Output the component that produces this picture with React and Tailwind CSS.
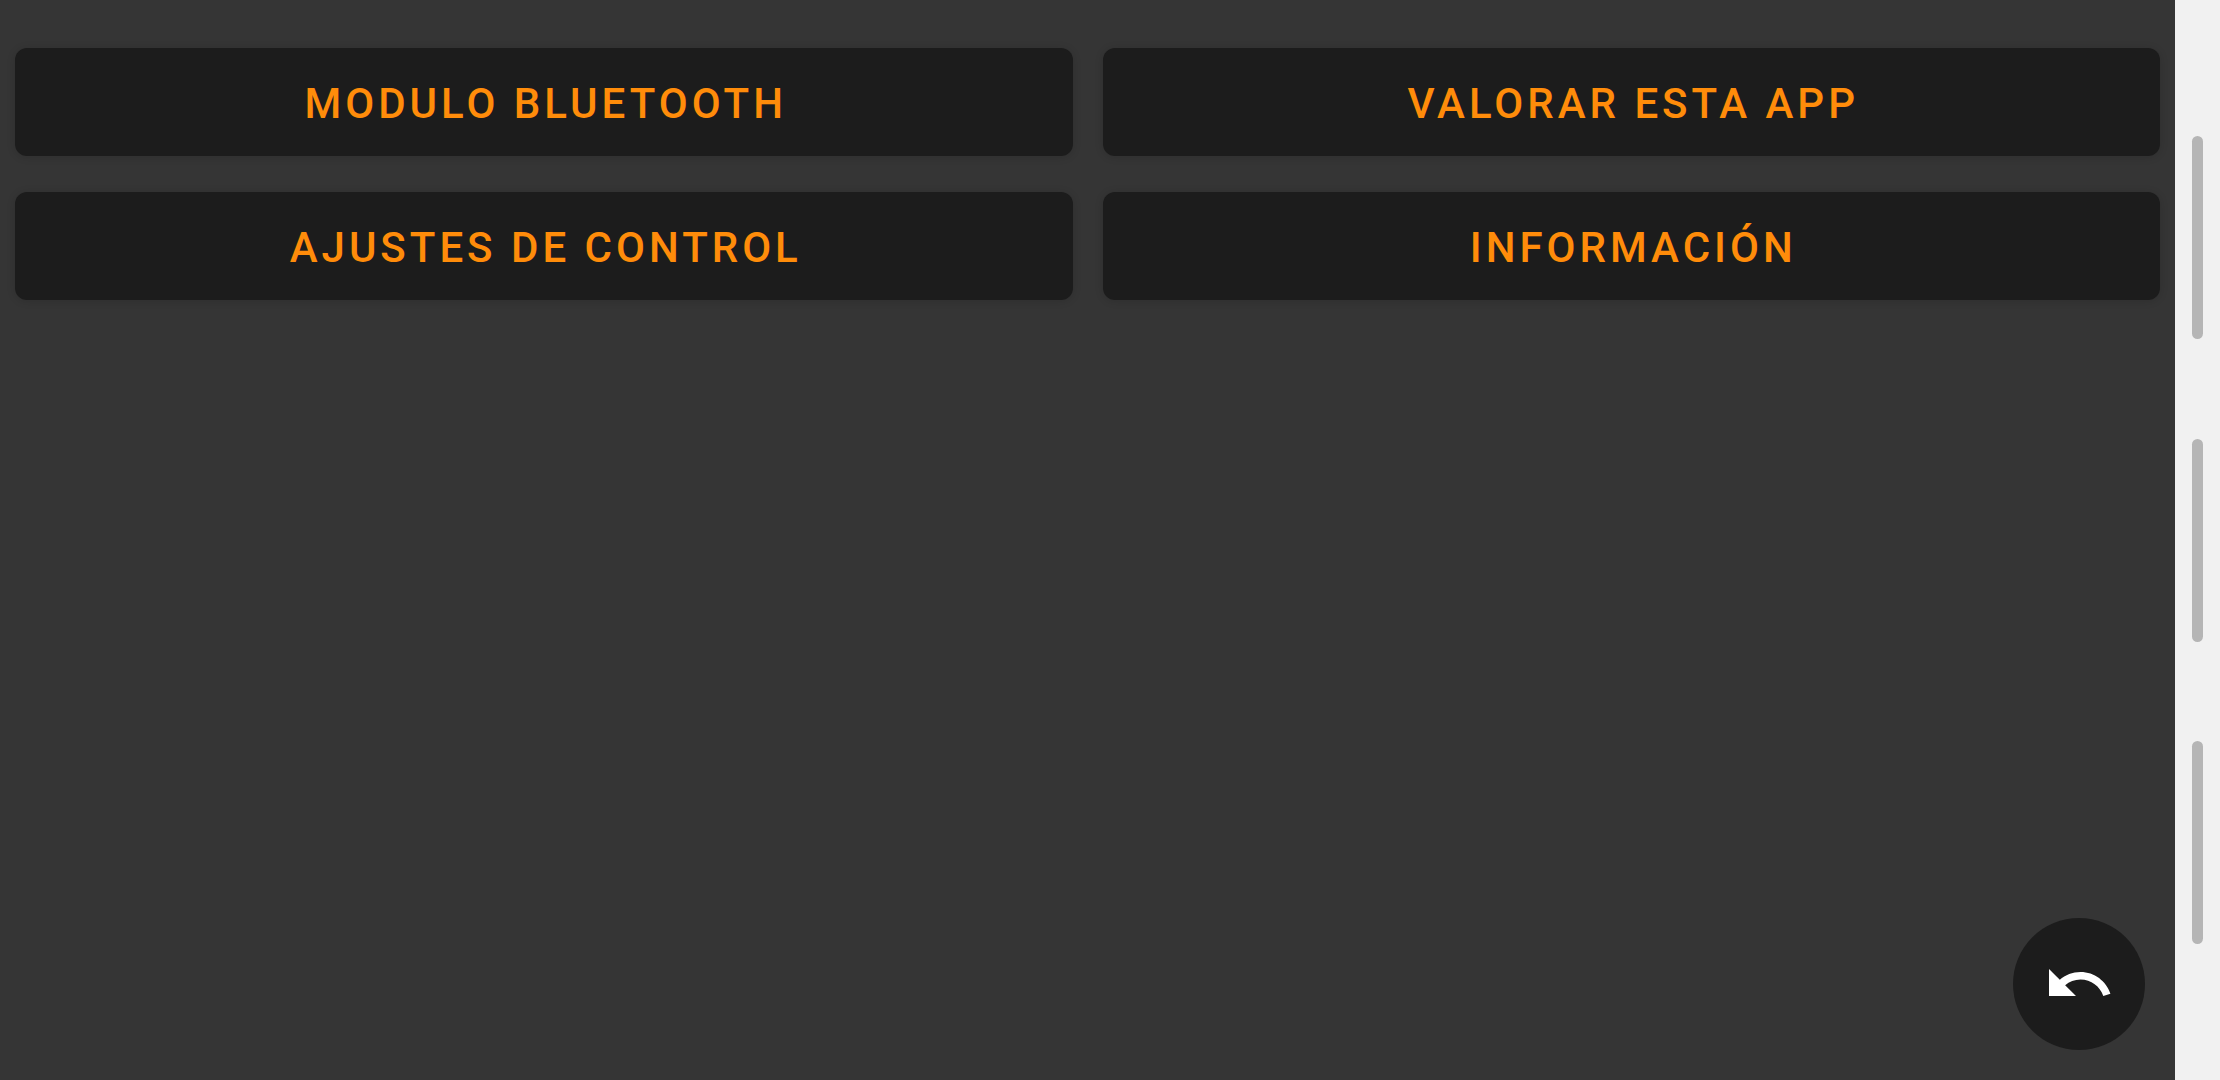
// src/App.jsx
import { MdUndo } from 'react-icons/md'

const MENU = ['Modulo Bluetooth', 'Valorar esta app', 'Ajustes de control', 'Información']

function MenuButton({ label }) {
  return (
    <button
      type="button"
      className="h-[108px] rounded-xl bg-[#1c1c1c] pt-1 pl-1 text-[42px] leading-[48px] font-medium uppercase tracking-[4px] text-[#ff8c0a] shadow-[0_1px_8px_rgba(0,0,0,0.14)]"
    >
      {label}
    </button>
  )
}

// light strip on the right edge with the three grip bars
function SideRail() {
  return (
    <aside className="flex w-[45px] shrink-0 flex-col items-center justify-between bg-[#f1f1f1] py-[136px]">
      <span className="h-[203px] w-[11px] rounded-full bg-[#b5b5b5]" />
      <span className="h-[203px] w-[11px] rounded-full bg-[#b5b5b5]" />
      <span className="h-[203px] w-[11px] rounded-full bg-[#b5b5b5]" />
    </aside>
  )
}

export default function App() {
  return (
    <div className="flex min-h-screen bg-[#353535] font-['Roboto',sans-serif]">
      <main className="flex flex-1 flex-col justify-between">
        <nav className="grid grid-cols-2 gap-x-[30px] gap-y-9 px-[15px] pt-12">
          {MENU.map((label) => (
            <MenuButton key={label} label={label} />
          ))}
        </nav>
        <div className="flex justify-end p-[30px]">
          <button
            type="button"
            aria-label="Volver"
            className="flex size-[132px] items-center justify-center rounded-full bg-[#1c1c1c] text-white"
          >
            <MdUndo size={72} />
          </button>
        </div>
      </main>
      <SideRail />
    </div>
  )
}
